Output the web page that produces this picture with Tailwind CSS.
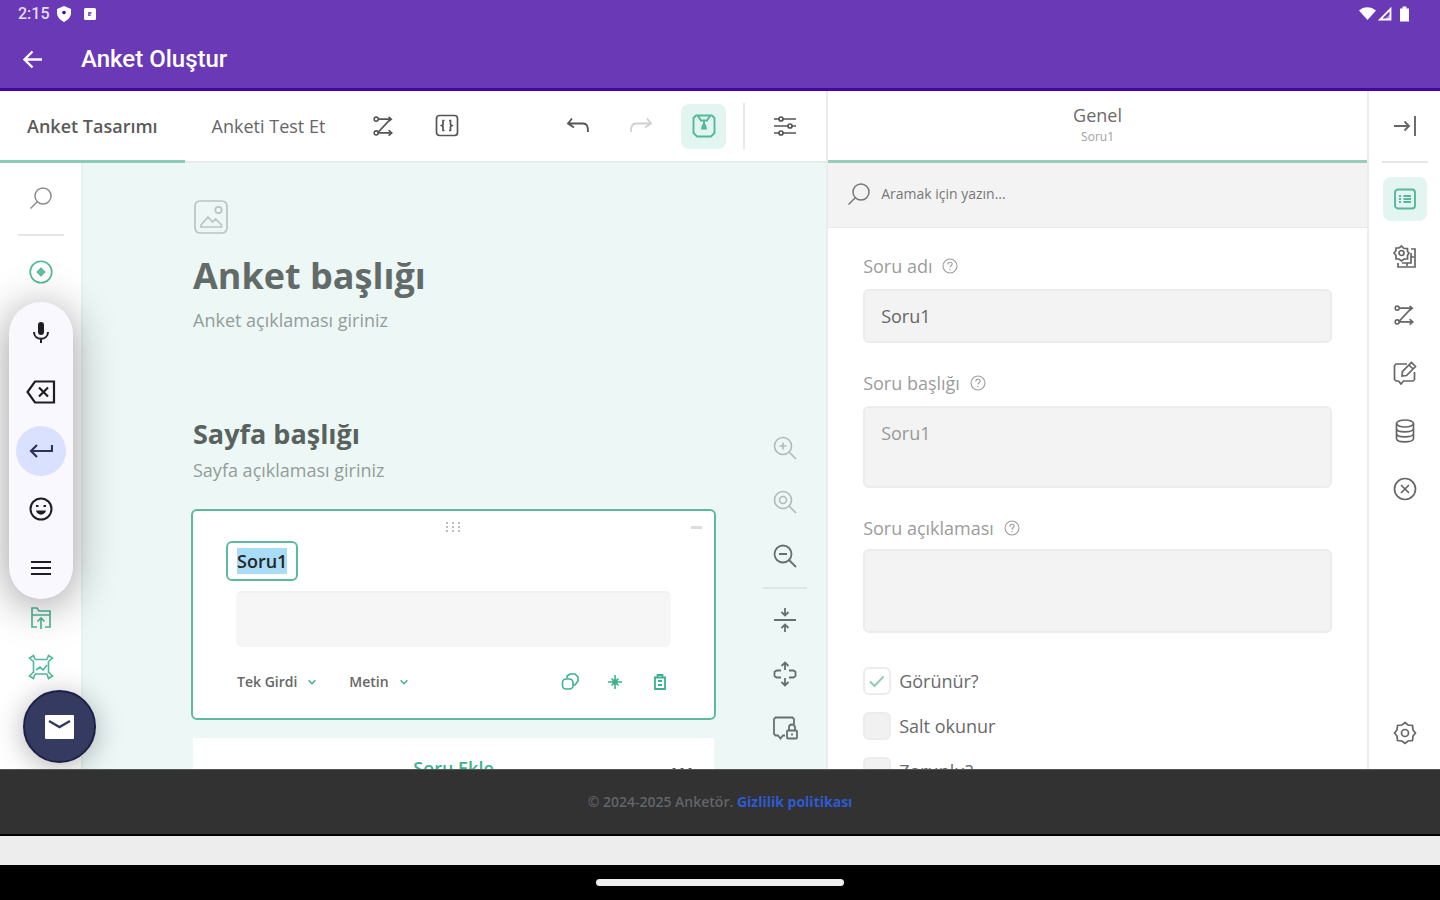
<!DOCTYPE html>
<html lang="tr">

<head>
    <meta charset="UTF-8">
    <meta name="viewport" content="width=device-width, initial-scale=1.0">
    <title>Anket Oluştur</title>
    <script src="https://cdn.jsdelivr.net/npm/@tailwindcss/browser@4"></script>
</head>

<body class="h-screen flex flex-col overflow-hidden bg-black font-['Open_Sans','Noto_Sans',sans-serif] text-[#404040]">
    <!-- Ortak simgeler -->
    <svg class="hidden">
        <symbol id="mantik" viewBox="0 0 24 24" fill="none" stroke="currentColor" stroke-width="1.7">
            <path d="M6 4.500h13M19 4.500 5 19.500M5 19.500h15M17 16.500l3.500 3-3.500 3M17 2l3 2.500-3 2.500" />
            <circle cx="3.500" cy="4.500" r="2.200" />
            <circle cx="3.500" cy="19.500" r="2.200" />
        </symbol>
        <symbol id="ara" viewBox="0 0 24 24" fill="none" stroke="currentColor" stroke-width="1.5">
            <circle cx="14" cy="10" r="8" />
            <path d="M8.500 15.500 1.500 22.500" />
        </symbol>
        <symbol id="yardim" viewBox="0 0 16 16" fill="none" stroke="currentColor" stroke-width="1.100">
            <circle cx="8" cy="8" r="7" />
            <path d="M5.800 6.500c0-3 4.400-3 4.400-.4C10.200 7.800 8 7.800 8 9.500M8 11v1.300" />
        </symbol>
        <symbol id="ok" viewBox="0 0 12 12" fill="none" stroke="currentColor" stroke-width="1.800">
            <path d="m2 4 4 4 4-4" />
        </symbol>
    </svg>

    <header class="shrink-0 h-[91px] bg-[#6a39b5] border-b-3 border-[#4405a5] text-white font-['Roboto',sans-serif]">
        <div class="h-7 px-[18px] flex items-center justify-between">
            <div class="flex items-center gap-[7px]">
                <span class="text-base font-medium text-[#e6dcf5]">2:15</span>
                <svg class="w-3.5 h-4" viewBox="0 0 14 16">
                    <path fill="white" d="M7 0 14 3v4c0 4-3 7-7 9-4-2-7-5-7-9V3z" />
                    <circle cx="7" cy="6.500" r="1.800" fill="#4405a5" />
                </svg>
                <svg class="w-3 h-3 ml-1.5" viewBox="0 0 12 12">
                    <rect width="12" height="12" rx="1.500" fill="white" />
                    <path d="M4 4h3.500v4H4z" fill="#8a63cc" />
                    <path d="M5.500 6h3v2.500z" fill="white" />
                </svg>
            </div>
            <svg class="w-[51px] h-4 mr-3" viewBox="0 0 51 16" fill="white">
                <path d="M0 4.500C4.500 0 12 0 17 4.500L8.500 14z" />
                <path d="M31.500 3v10.500H21z" fill="none" stroke="white" stroke-width="1.800" />
                <path d="M31 2v6l-6 6h7V2z" opacity=".5" />
                <path d="M41 2.500h2.500V.500h4v2H50v13h-9z" />
            </svg>
        </div>
        <div class="h-[62px] pl-[22px] flex items-center gap-[38px]">
            <button aria-label="Geri">
                <svg class="w-[21px] h-[21px]" viewBox="0 0 21 21" fill="none" stroke="white" stroke-width="2.400">
                    <path d="M20 10.500H2.500M10.500 2.500l-8 8 8 8" />
                </svg>
            </button>
            <h1 class="text-2xl font-medium">Anket Oluştur</h1>
        </div>
    </header>

    <main class="relative flex-1 min-h-0 flex overflow-hidden bg-white">
        <!-- Tasarım alanı -->
        <section class="flex-1 min-w-0 flex flex-col">
            <div class="shrink-0 h-[72px] flex items-stretch border-b-2 border-[#e3eae8] text-[#555]">
                <button class="px-[27px] -mb-0.5 border-b-3 border-[#8ccbb7] text-lg font-semibold text-[#5a5a5a]">Anket Tasarımı</button>
                <button class="px-[27px] text-lg text-[#666]">Anketi Test Et</button>
                <button class="w-[63px] grid place-items-center" aria-label="Mantık">
                    <svg class="w-[22px] h-[22px]"><use href="#mantik" /></svg>
                </button>
                <button class="w-[63px] grid place-items-center" aria-label="JSON">
                    <svg class="w-6 h-6" viewBox="0 0 24 24" fill="none" stroke="currentColor" stroke-width="1.700">
                        <rect x="1.500" y="1.500" width="21" height="20" rx="3" />
                        <path d="M9.500 6.500H8v4l-1.500 1L8 12.500v4h1.500M14 6.500h1.500v4l1.500 1-1.500 1v4H14" />
                    </svg>
                </button>
                <div class="ml-auto flex items-center">
                    <button class="w-[63px] grid place-items-center" aria-label="Geri al">
                        <svg class="w-6 h-6" viewBox="0 0 24 24" fill="none" stroke="currentColor" stroke-width="1.800">
                            <path d="M8 13.500 2 9.500l4-5M2 9.500h15c4 0 5 2.500 5 8.500" />
                        </svg>
                    </button>
                    <button class="w-[63px] grid place-items-center text-[#d0d0d0]" aria-label="Yinele">
                        <svg class="w-6 h-6" viewBox="0 0 24 24" fill="none" stroke="currentColor" stroke-width="1.800">
                            <path d="m16 13.500 6-4-4-5M22 9.500H7c-4 0-5 2.500-5 8.500" />
                        </svg>
                    </button>
                    <button class="w-[45px] h-[45px] mx-[9px] rounded-lg grid place-items-center bg-[#e3f5f0] text-[#55b898]" aria-label="Kaydet">
                        <svg class="w-6 h-6" viewBox="0 0 24 24" fill="none" stroke="currentColor" stroke-width="1.900">
                            <path d="M4 1.500h16L22.500 4v15L19 22.500H5L1.500 19V4zM6 2l3 4.500h6L18 2" />
                            <path d="M12 7v4" />
                            <path d="M10 10.500h4l1 5H9z" fill="currentColor" stroke="none" />
                        </svg>
                    </button>
                    <span class="w-0.5 h-[46px] ml-2 mr-[18px] bg-[#e8e8e8]"></span>
                    <button class="w-11 h-11 mr-[19px] grid place-items-center" aria-label="Ayarlar">
                        <svg class="w-6 h-6" viewBox="0 0 24 24" fill="none" stroke="currentColor" stroke-width="1.700">
                            <path d="M1 5h5M10 5h13M1 12h14M19 12h4M1 19h5M10 19h13" />
                            <circle cx="8" cy="5" r="2" />
                            <circle cx="17" cy="12" r="2" />
                            <circle cx="8" cy="19" r="2" />
                        </svg>
                    </button>
                </div>
            </div>

            <div class="flex-1 min-h-0 flex bg-[#edf8f6]">
                <!-- Araç kutusu -->
                <aside class="shrink-0 w-[83px] flex flex-col items-center bg-white border-r-2 border-[#e8f1ef] text-[#4fb999]">
                    <button class="mt-[23px] text-[#8b8b8b]" aria-label="Ara">
                        <svg class="w-6 h-6"><use href="#ara" /></svg>
                    </button>
                    <span class="w-[46px] h-0.5 mt-6 bg-[#e6e6e6]"></span>
                    <svg class="w-6 h-6 mt-6" viewBox="0 0 24 24" fill="none" stroke="currentColor" stroke-width="1.600">
                        <circle cx="12" cy="12" r="10.800" />
                        <path d="M12 8v8M8 12h8" />
                        <path d="m12 8.500 3.500 3.500-3.500 3.500L8.500 12z" />
                    </svg>
                    <svg class="w-[22px] h-6 mt-[322px]" viewBox="0 0 22 24" fill="none" stroke="currentColor" stroke-width="1.700">
                        <path d="M7 21H2V2h5l2 3h11v16h-5M2 9h18M11 23V12M7.500 15.500 11 12l3.500 3.500" />
                    </svg>
                    <svg class="w-[26px] h-[26px] mt-6" viewBox="0 0 26 26" fill="none" stroke="currentColor" stroke-width="1.600">
                        <path d="M7 5.500h12M7 20h12M5.500 7v12M20.500 7v12M7 5.500 5.500 1.500 1.500 4l4 3.500M19 5.500l1.500-4L24.500 4l-4 3.500M7 20l-1.500 4.500-4-2.500 4-4M19 20l1.500 4.500 4-2.500-4-4M8 16l4-3 3 3 4-5" />
                    </svg>
                </aside>

                <div class="flex-1 min-w-0 pl-[108px] pr-[47px]">
                    <svg class="w-[34px] h-[34px] mt-[37px] ml-[3px] text-[#b9c5c2]" viewBox="0 0 34 34" fill="none" stroke="currentColor" stroke-width="1.700">
                        <rect x="1" y="1" width="32" height="32" rx="5" />
                        <circle cx="24.500" cy="10" r="3.200" />
                        <path d="m7 25 7-8 4.500 5 3-3 6 6v2H7z" />
                    </svg>
                    <h2 class="mt-[18px] pl-0.5 text-4xl leading-12 font-bold text-[#636b69]">Anket başlığı</h2>
                    <p class="mt-2 pl-0.5 text-lg leading-6 text-[#949c9a]">Anket açıklaması giriniz</p>
                    <h3 class="mt-[84px] pl-0.5 text-[27px] leading-9 font-bold text-[#5a6260]">Sayfa başlığı</h3>
                    <p class="mt-1.5 pl-0.5 text-lg leading-6 text-[#949c9a]">Sayfa açıklaması giriniz</p>

                    <article class="mt-[27px] h-[211px] flex flex-col rounded-md border-2 border-[#5dba9e] bg-white pl-[33px] pr-3">
                        <div class="shrink-0 h-[30px] pt-0.5 flex items-center justify-between text-[#bdbdbd]">
                            <span class="w-3"></span>
                            <svg class="w-4 h-3 ml-[-23px]" viewBox="0 0 16 12" fill="currentColor">
                                <path d="M1 1h2v2H1zM7 1h2v2H7zM13 1h2v2h-2zM1 5h2v2H1zM7 5h2v2H7zM13 5h2v2h-2zM1 9h2v2H1zM7 9h2v2H7zM13 9h2v2h-2z" />
                            </svg>
                            <span class="w-[11px] h-[3px] bg-[#dcdcdc]"></span>
                        </div>
                        <div class="shrink-0 self-start h-10 px-[9px] grid place-items-center rounded-md border-2 border-[#5dba9e] text-lg font-semibold text-[#262626]">
                            <span class="leading-[26px] bg-[#a9dcf7]">Soru1</span>
                        </div>
                        <input aria-label="Soru1" readonly class="shrink-0 mt-2.5 ml-2.5 mr-[31px] h-14 rounded-md bg-[#f6f6f6] border-t-2 border-[#f0f0f0]">
                        <div class="mt-[23px] ml-[11px] mr-[33px] flex items-center text-sm leading-6 font-semibold text-[#666]">
                            <button class="flex items-center gap-2.5">Tek Girdi <svg class="w-2.5 h-2.5 text-[#3db28f]"><use href="#ok" /></svg></button>
                            <button class="ml-8 flex items-center gap-2.5">Metin <svg class="w-2.5 h-2.5 text-[#3db28f]"><use href="#ok" /></svg></button>
                            <div class="ml-auto flex items-center gap-[27px] text-[#3db28f]">
                                <button aria-label="Çoğalt">
                                    <svg class="w-[18px] h-[18px]" viewBox="0 0 18 18" fill="none" stroke="currentColor" stroke-width="1.600">
                                        <path d="M6 5V3l3-2h5l3 3v4l-3 4h-2" />
                                        <rect x="1.500" y="6" width="10.500" height="10" rx="3.500" />
                                    </svg>
                                </button>
                                <button aria-label="Zorunlu">
                                    <svg class="w-[18px] h-[18px]" viewBox="0 0 18 18" fill="none" stroke="currentColor" stroke-width="1.600">
                                        <path d="M9 2v14M2 9h14M5.500 5.500l7 7M12.500 5.500l-7 7" />
                                        <circle cx="9" cy="9" r="2" fill="currentColor" />
                                    </svg>
                                </button>
                                <button aria-label="Sil">
                                    <svg class="w-[18px] h-[18px]" viewBox="0 0 18 18" fill="none" stroke="currentColor" stroke-width="1.800">
                                        <path d="M3 4.500h12M6.500 4.500V2h5v2.500M4 4.500V16h10V4.500M7 8h4M7 12h4" />
                                    </svg>
                                </button>
                            </div>
                        </div>
                    </article>
                    <div class="mt-[18px] mx-0.5 h-[60px] flex items-center justify-between bg-white px-5">
                        <span class="w-6"></span>
                        <button class="text-lg font-semibold text-[#3db28f]">Soru Ekle</button>
                        <button class="pt-1" aria-label="Diğer">
                            <svg class="w-6 h-1.5" viewBox="0 0 24 6" fill="#404040">
                                <circle cx="4" cy="3" r="2" />
                                <circle cx="12" cy="3" r="2" />
                                <circle cx="20" cy="3" r="2" />
                            </svg>
                        </button>
                    </div>
                </div>

                <!-- Yakınlaştırma -->
                <nav class="shrink-0 w-[63px] pb-[19px] pr-[19px] flex flex-col justify-end items-center gap-2.5 text-[#66706e]">
                    <button class="w-11 h-11 grid place-items-center text-[#b0bab7]" aria-label="Yakınlaştır">
                        <svg class="w-6 h-6" viewBox="0 0 24 24" fill="none" stroke="currentColor" stroke-width="1.600">
                            <circle cx="10" cy="10" r="8.500" />
                            <path d="m16 16 7 7M10 6.500v7M6.500 10h7" />
                        </svg>
                    </button>
                    <button class="w-11 h-11 grid place-items-center text-[#b0bab7]" aria-label="%100">
                        <svg class="w-6 h-6" viewBox="0 0 24 24" fill="none" stroke="currentColor" stroke-width="1.600">
                            <circle cx="10" cy="10" r="8.500" />
                            <circle cx="10" cy="10" r="3.500" />
                            <path d="m16 16 7 7" />
                        </svg>
                    </button>
                    <button class="w-11 h-11 grid place-items-center" aria-label="Uzaklaştır">
                        <svg class="w-6 h-6" viewBox="0 0 24 24" fill="none" stroke="currentColor" stroke-width="1.800">
                            <circle cx="10" cy="10" r="8.500" />
                            <path d="m16 16 7 7M6 10h8" />
                        </svg>
                    </button>
                    <span class="w-11 h-0.5 -my-px bg-[#dde6e4]"></span>
                    <button class="w-11 h-11 grid place-items-center" aria-label="Daralt">
                        <svg class="w-6 h-6" viewBox="0 0 24 24" fill="none" stroke="currentColor" stroke-width="1.800">
                            <path d="M1 12h22M12 0v7M8.500 4 12 7.500 15.500 4M12 24v-7M8.500 20l3.500-3.500 3.500 3.500" />
                        </svg>
                    </button>
                    <button class="w-11 h-11 grid place-items-center" aria-label="Genişlet">
                        <svg class="w-6 h-[26px]" viewBox="0 0 24 26" fill="none" stroke="currentColor" stroke-width="1.800">
                            <path d="M8 9.500H3.500L1.500 11v4l2 1.500H8M16 9.500h4.500l2 1.500v4l-2 1.500H16M12 9V2M8.500 5 12 1.500 15.500 5M12 17v7M8.500 21l3.500 3.500 3.500-3.500" />
                        </svg>
                    </button>
                    <button class="w-11 h-11 grid place-items-center" aria-label="Kilitle">
                        <svg class="w-[26px] h-[26px]" viewBox="0 0 26 26" fill="none" stroke="currentColor" stroke-width="1.800">
                            <path d="M22 9V4l-1.500-1.500h-17L2 4v15l1.500 1.500H6l2.500 3 2.500-3h2" />
                            <rect x="15" y="15.500" width="10" height="8" rx="1" />
                            <path d="M17 15.500v-3c0-4 6-4 6 0v3M20 18.500v2" />
                        </svg>
                    </button>
                </nav>
            </div>
        </section>

        <!-- Özellikler -->
        <section class="shrink-0 w-[37.700%] flex flex-col border-x-2 border-[#e9eeed]">
            <div class="shrink-0 h-[72px] pt-3 border-b-3 border-[#9accbb] text-center">
                <h2 class="text-lg leading-6 text-[#6b6b6b]">Genel</h2>
                <p class="text-xs leading-5 text-[#a0a0a0]">Soru1</p>
            </div>
            <div class="shrink-0 h-[65px] pb-0.5 pl-[19px] flex items-center gap-2.5 bg-[#f3f3f3] border-b border-[#ebebeb] text-[#777]">
                <svg class="w-6 h-6"><use href="#ara" /></svg>
                <input type="search" aria-label="Ara" placeholder="Aramak için yazın..." class="flex-1 text-sm placeholder:text-[#777]">
            </div>
            <form class="px-[35px] pt-[25px] text-lg text-[#6a6a6a]">
                <div class="flex items-center gap-2.5 leading-[26px] text-[#9c9c9c]">
                    <label for="soru-adi">Soru adı</label>
                    <svg class="w-4 h-4"><use href="#yardim" /></svg>
                </div>
                <input id="soru-adi" value="Soru1" class="mt-2.5 w-full h-[54px] px-4 rounded-md bg-[#f3f3f3] border-2 border-[#ececec] text-[#666]">
                <div class="mt-[27px] flex items-center gap-2.5 leading-[26px] text-[#9c9c9c]">
                    <label for="soru-basligi">Soru başlığı</label>
                    <svg class="w-4 h-4"><use href="#yardim" /></svg>
                </div>
                <textarea id="soru-basligi" placeholder="Soru1" class="block mt-2.5 w-full h-[82px] px-4 py-[11px] rounded-md bg-[#f3f3f3] border-2 border-[#ececec] resize-none placeholder:text-[#989898]"></textarea>
                <div class="mt-[27px] flex items-center gap-2.5 leading-[26px] text-[#9c9c9c]">
                    <label for="soru-aciklamasi">Soru açıklaması</label>
                    <svg class="w-4 h-4"><use href="#yardim" /></svg>
                </div>
                <textarea id="soru-aciklamasi" class="block mt-2 w-full h-[84px] px-4 py-[11px] rounded-md bg-[#f3f3f3] border-2 border-[#ececec] resize-none"></textarea>

                <div class="mt-[34px] flex flex-col gap-[17px]">
                    <label class="flex items-center gap-2 leading-7">
                        <span class="relative w-7 h-7">
                            <input type="checkbox" checked class="block appearance-none w-7 h-7 rounded-md border-2 border-[#ececec] bg-[#f3f3f3] checked:bg-white">
                            <svg class="absolute inset-0 w-7 h-7 pointer-events-none" viewBox="0 0 28 28" fill="none" stroke="#8fcdb9" stroke-width="2">
                                <path d="m7 14.500 4.500 4.500L20.500 9.500" />
                            </svg>
                        </span>
                        Görünür?
                    </label>
                    <label class="flex items-center gap-2 leading-7">
                        <input type="checkbox" class="appearance-none w-7 h-7 rounded-md border-2 border-[#ececec] bg-[#f1f1f1]">
                        Salt okunur
                    </label>
                    <label class="flex items-center gap-2 leading-7">
                        <input type="checkbox" class="appearance-none w-7 h-7 rounded-md border-2 border-[#ececec] bg-[#f1f1f1]">
                        Zorunlu?
                    </label>
                </div>
            </form>
        </section>

        <!-- Sağ menü -->
        <nav class="shrink-0 w-[71px] pt-[13px] pb-3.5 flex flex-col items-center gap-3.5 text-[#666]">
            <button class="w-11 h-11 grid place-items-center" aria-label="Gizle">
                <svg class="w-6 h-6" viewBox="0 0 24 24" fill="none" stroke="currentColor" stroke-width="1.900">
                    <path d="M1 12h15M11.500 7.500 16 12l-4.500 4.500M22 2v20" />
                </svg>
            </button>
            <span class="w-[46px] h-0.5 -mt-px bg-[#e6e6e6]"></span>
            <button class="w-11 h-11 rounded-lg grid place-items-center bg-[#e3f5f0] text-[#55b898]" aria-label="Genel">
                <svg class="w-[22px] h-[22px]" viewBox="0 0 22 22" fill="none" stroke="currentColor" stroke-width="1.900">
                    <rect x="1" y="1.500" width="20" height="19" rx="3" />
                    <path d="M5 8h2M5 11h2M5 14h2M9.500 8H17M9.500 11H17M9.500 14H17" />
                </svg>
            </button>
            <button class="w-11 h-11 grid place-items-center" aria-label="Düzen">
                <svg class="w-6 h-6" viewBox="0 0 24 24" fill="none" stroke="currentColor" stroke-width="1.700">
                    <circle cx="8.500" cy="8" r="2.500" />
                    <path d="M8.500 1 11 3.500h3.500v3L16 8l-1.500 2.500V14H11l-2.500 2L6 14H3v-3.500L1 8l2-2.500V3h3zM18 4h4v18H5v-4M18 8v10H9M18 12h3M14 18v3" />
                </svg>
            </button>
            <button class="w-11 h-11 grid place-items-center" aria-label="Koşullar">
                <svg class="w-[22px] h-[22px]"><use href="#mantik" /></svg>
            </button>
            <button class="w-11 h-11 grid place-items-center" aria-label="Doğrulama">
                <svg class="w-6 h-6" viewBox="0 0 24 24" fill="none" stroke="currentColor" stroke-width="1.700">
                    <path d="M14 3H3L1.500 4.500v14L3 20h2.500L8 23l2.500-3H20l1.500-1.500V11M9 15l.500-4.500 9-9 4 4-9 9zM16 4l4 4" />
                </svg>
            </button>
            <button class="w-11 h-11 grid place-items-center" aria-label="Veri">
                <svg class="w-6 h-6" viewBox="0 0 24 24" fill="none" stroke="currentColor" stroke-width="1.700">
                    <ellipse cx="12" cy="4.500" rx="8.500" ry="3.500" />
                    <path d="M3.500 4.500v15c0 4.500 17 4.500 17 0v-15M3.500 9.500c0 4.500 17 4.500 17 0M3.500 14.500c0 4.500 17 4.500 17 0" />
                </svg>
            </button>
            <button class="w-11 h-11 grid place-items-center" aria-label="Temizle">
                <svg class="w-6 h-6" viewBox="0 0 24 24" fill="none" stroke="currentColor" stroke-width="1.700">
                    <circle cx="12" cy="12" r="10.500" />
                    <path d="m8 8 8 8M16 8l-8 8" />
                </svg>
            </button>
            <button class="w-11 h-11 mt-auto grid place-items-center" aria-label="Anket ayarları">
                <svg class="w-6 h-6" viewBox="0 0 24 24" fill="none" stroke="currentColor" stroke-width="1.700">
                    <circle cx="12" cy="12" r="3.500" />
                    <path d="m12 1.500 3 2.500 4.500.500L20 9l2.500 3-2.500 3-.500 4.500L15 20l-3 2.500L9 20l-4.500-.500L4 15l-2.500-3L4 9l.500-4.500L9 4z" />
                </svg>
            </button>
        </nav>

        <!-- Klavye araç çubuğu -->
        <div class="absolute left-[9px] top-[211px] w-16 h-[297px] py-1.5 flex flex-col items-center justify-between rounded-full bg-[#f9f8ff] shadow-[0_6px_44px_rgba(0,0,0,0.4)] text-[#1d1d22]">
            <button class="w-[50px] h-[50px] grid place-items-center" aria-label="Sesle yaz">
                <svg class="w-6 h-6" viewBox="0 0 24 24" fill="none" stroke="currentColor" stroke-width="2">
                    <rect x="10" y="2" width="4" height="11" rx="2" fill="currentColor" />
                    <path d="M5 11c0 9 14 9 14 0M12 18v4" />
                </svg>
            </button>
            <button class="w-[50px] h-[50px] grid place-items-center" aria-label="Sil">
                <svg class="w-[30px] h-6" viewBox="0 0 30 24" fill="none" stroke="currentColor" stroke-width="2.200">
                    <path d="M9 1.500h19v21H9L1.500 12zM13 7.500l9 9M22 7.500l-9 9" />
                </svg>
            </button>
            <button class="w-[50px] h-[50px] rounded-full bg-[#dae1ff] grid place-items-center text-[#2b3358]" aria-label="Enter">
                <svg class="w-6 h-4" viewBox="0 0 24 16" fill="none" stroke="currentColor" stroke-width="2.200">
                    <path d="M23 2v6H2M8 2 2 8l6 6" />
                </svg>
            </button>
            <button class="w-[50px] h-[50px] grid place-items-center" aria-label="Emoji">
                <svg class="w-6 h-6" viewBox="0 0 24 24" fill="none" stroke="currentColor" stroke-width="2">
                    <circle cx="12" cy="12" r="10.500" />
                    <path d="M7 9h2.500M14.500 9H17" />
                    <path d="M7 13.500h10c-1 5.500-9 5.500-10 0z" fill="currentColor" stroke="none" />
                </svg>
            </button>
            <button class="w-[50px] h-[50px] grid place-items-center" aria-label="Menü">
                <svg class="w-5 h-4" viewBox="0 0 20 16" fill="none" stroke="currentColor" stroke-width="2">
                    <path d="M0 2h20M0 8h20M0 14h20" />
                </svg>
            </button>
        </div>

        <button class="absolute left-[23px] bottom-[6px] w-[73px] h-[73px] rounded-full grid place-items-center bg-[#343a60] border-2 border-[#1d2148] shadow-[0_4px_28px_rgba(0,0,0,0.3)]" aria-label="Mesaj gönder">
            <svg class="w-[29px] h-6" viewBox="0 0 29 24">
                <rect width="29" height="24" rx="1" fill="white" />
                <path d="m4 6 10.500 6L25 6" fill="none" stroke="#343a60" stroke-width="2.400" />
            </svg>
        </button>
    </main>

    <footer class="shrink-0 h-[67px] grid place-items-center bg-[#323232] border-t border-b-2 border-t-[#555] border-b-black">
        <p class="text-sm font-semibold text-[#626569]">© 2024-2025 Anketör. <a href="#" class="font-bold text-[#2f5bd0]">Gizlilik politikası</a></p>
    </footer>
    <div class="shrink-0 h-[29px] bg-[#ededed]"></div>
    <div class="shrink-0 h-[35px] grid place-items-center">
        <span class="w-[248px] h-[7px] rounded-full bg-[#eee]"></span>
    </div>
</body>

</html>
